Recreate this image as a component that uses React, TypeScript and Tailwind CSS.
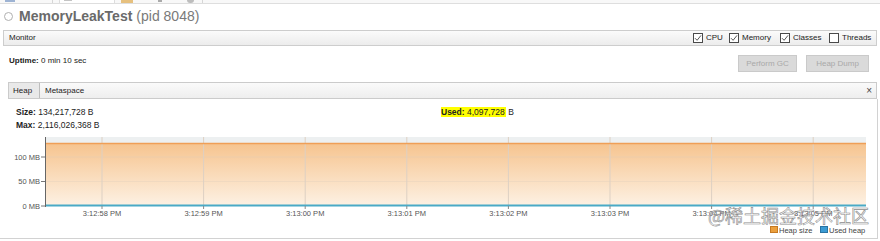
import React from "react";

const xs = [102, 203.6, 305.2, 406.8, 508.4, 610, 711.6, 813.2];
const xl = [
  "3:12:58 PM",
  "3:12:59 PM",
  "3:13:00 PM",
  "3:13:01 PM",
  "3:13:02 PM",
  "3:13:03 PM",
  "3:13:04 PM",
  "3:13:05 PM",
];

function Check({ checked }: { checked: boolean }) {
  return (
    <span className="w-[10px] h-[10px] border border-[#4a4a4a] bg-white flex items-center justify-center shrink-0">
      {checked && (
        <svg width="8" height="8" viewBox="0 0 8 8">
          <path d="M1 4.2 L3.1 6.3 L7 1.4" fill="none" stroke="#444" strokeWidth="0.9" />
        </svg>
      )}
    </span>
  );
}

function Chart() {
  return (
    <svg width="880" height="106" className="block" style={{ fontFamily: "'Liberation Sans', Arial, sans-serif" }}>
      <defs>
        <linearGradient id="hg" x1="0" y1="0" x2="0" y2="1">
          <stop offset="0" stopColor="#f6c48f" />
          <stop offset="1" stopColor="#fdf1e3" />
        </linearGradient>
      </defs>
      <rect x="45" y="5" width="821" height="7" fill="#edf0f1" />
      <rect x="45" y="11.5" width="821" height="62" fill="url(#hg)" />
      <line x1="45" x2="866" y1="25" y2="25" stroke="#ecccaa" strokeWidth="1" />
      <line x1="45" x2="866" y1="49.5" y2="49.5" stroke="#f0d9c0" strokeWidth="1" />
      {xs.map((x) => (
        <line key={x} x1={x} x2={x} y1="5" y2="74" stroke="#ddd0c3" strokeWidth="1" />
      ))}
      <line x1="45" x2="866" y1="11.5" y2="11.5" stroke="#ef9f57" strokeWidth="1.6" />
      <line x1="45" x2="866" y1="73.5" y2="73.5" stroke="#4aaac6" strokeWidth="2" />
      <line x1="45.5" x2="45.5" y1="5" y2="75" stroke="#666" strokeWidth="1" />
      {[25, 49.5, 74].map((y) => (
        <line key={y} x1="41" x2="45" y1={y} y2={y} stroke="#777" strokeWidth="1" />
      ))}
      <g fontSize="7.5" fill="#555" textAnchor="end">
        <text x="40" y="27.5">100 MB</text>
        <text x="40" y="52">50 MB</text>
        <text x="40" y="76.5">0 MB</text>
      </g>
      {xs.map((x) => (
        <line key={"t" + x} x1={x} x2={x} y1="74" y2="77" stroke="#888" strokeWidth="1" />
      ))}
      <g fontSize="7.5" fill="#555" textAnchor="middle">
        {xs.map((x, i) => (
          <text key={"l" + x} x={x} y="84">
            {xl[i]}
          </text>
        ))}
      </g>
      <rect x="770.5" y="94.5" width="7" height="6" fill="#eb9f3c" stroke="#c77a22" strokeWidth="1" />
      <text x="779" y="100.5" fontSize="7.5" fill="#444">
        Heap size
      </text>
      <rect x="820.5" y="94.5" width="7" height="6" fill="#3b9bd3" stroke="#2a74a3" strokeWidth="1" />
      <text x="829" y="100.5" fontSize="7.5" fill="#444">
        Used heap
      </text>
    </svg>
  );
}

export default function App() {
  return (
    <div className="w-[880px] h-[241px] bg-white overflow-hidden relative font-['Liberation_Sans',Arial,sans-serif] text-[8.5px] text-[#222]">
      {/* cut-off tab strip */}
      <div className="h-[4px] flex items-stretch border-b border-[#dedede] bg-[#f8f8f8]">
        <div className="w-[53px] border-r border-[#d6d6d6] flex pl-[5px]">
          <span className="w-[10px] h-[2px] bg-[#9db3d3]" />
        </div>
        <div className="w-[56px] ml-[6px] border-x border-[#dddddd] bg-white flex pl-[4px]">
          <span className="w-[8px] h-[1px] bg-[#c4c4c4]" />
        </div>
        <div className="w-[88px] flex pl-[6px] gap-[25px] border-r border-[#d6d6d6]">
          <span className="w-[12px] h-[3px] bg-[#e6c07e]" />
          <span className="w-[4px] h-[2px] bg-[#aaa]" />
          <span className="w-[7px] h-[3px] rounded-b-full bg-[#bdbdbd]" />
        </div>
      </div>

      {/* title */}
      <div className="h-[24px] flex items-center pl-[4px]">
        <span className="w-[9px] h-[9px] rounded-full border border-[#b0b0b0] bg-white" />
        <span className="ml-[6px] text-[14px] font-bold text-[#6a6a6a] leading-none">MemoryLeakTest</span>
        <span className="ml-[4px] text-[14px] text-[#7a7a7a] leading-none">(pid 8048)</span>
      </div>

      {/* monitor bar */}
      <div className="mt-[2px] ml-[3px] w-[874px] h-[16px] border border-[#cdcdcd] bg-gradient-to-b from-[#fbfbfb] to-[#ececec] flex items-center">
        <span className="pl-[5px] text-[8px] text-[#222]">Monitor</span>
        <div className="ml-auto flex items-center pr-[5px] text-[8px]">
          <div className="w-[36px] flex items-center gap-[3px]">
            <Check checked />
            <span>CPU</span>
          </div>
          <div className="w-[51px] flex items-center gap-[3px]">
            <Check checked />
            <span>Memory</span>
          </div>
          <div className="w-[49px] flex items-center gap-[3px]">
            <Check checked />
            <span>Classes</span>
          </div>
          <div className="w-[42px] flex items-center gap-[3px]">
            <Check checked={false} />
            <span>Threads</span>
          </div>
        </div>
      </div>

      {/* uptime row */}
      <div className="h-[26px] pt-[9px] flex items-start">
        <div className="pl-[9px] mt-[1px] leading-[10px] text-[8px]">
          <span className="font-bold">Uptime:</span> 0 min 10 sec
        </div>
        <div className="ml-auto flex gap-[9px] pr-[11px]">
          <div className="w-[59px] h-[17px] border border-[#cacaca] bg-[#dadada] text-[#a9a9a9] text-[8px] flex items-center justify-center">
            Perform GC
          </div>
          <div className="w-[63px] h-[17px] border border-[#cacaca] bg-[#dadada] text-[#a9a9a9] text-[8px] flex items-center justify-center">
            Heap Dump
          </div>
        </div>
      </div>

      {/* heap tab bar */}
      <div className="mt-[10px] ml-[8px] w-[869px] h-[17px] border border-[#cbcbcb] bg-gradient-to-b from-[#fafafa] to-[#eeeeee] flex items-stretch text-[8px]">
        <div className="w-[31px] bg-[#e9e9e9] border-r border-[#bdbdbd] flex items-center pl-[4px]">Heap</div>
        <div className="flex items-center pl-[5px]">Metaspace</div>
        <div className="ml-auto pr-[4px] flex items-center text-[10px] text-[#444]">×</div>
      </div>

      {/* content */}
      <div className="w-[878px] border-r border-b border-[#d2d2d2] pt-[7px]">
        <div className="flex h-[13px] items-center">
          <div className="w-[441px] pl-[16px]">
            <span className="font-bold">Size:</span> 134,217,728 B
          </div>
          <div>
            <span className="bg-[#ffff00] pr-[1px]">
              <span className="font-bold">Used:</span> 4,097,728
            </span>{" "}
            B
          </div>
        </div>
        <div className="h-[13px] flex items-center pl-[16px]">
          <span className="font-bold">Max:</span>&nbsp;2,116,026,368 B
        </div>
        <Chart />
      </div>

      {/* watermark */}
      <div className="absolute left-[708px] top-[206px] text-[18px] leading-none font-['Noto_Sans_CJK_SC',sans-serif] text-[rgba(255,255,255,0.35)] [-webkit-text-stroke:0.6px_#8d8d8d] whitespace-nowrap">
        @稀土掘金技术社区
      </div>
    </div>
  );
}
